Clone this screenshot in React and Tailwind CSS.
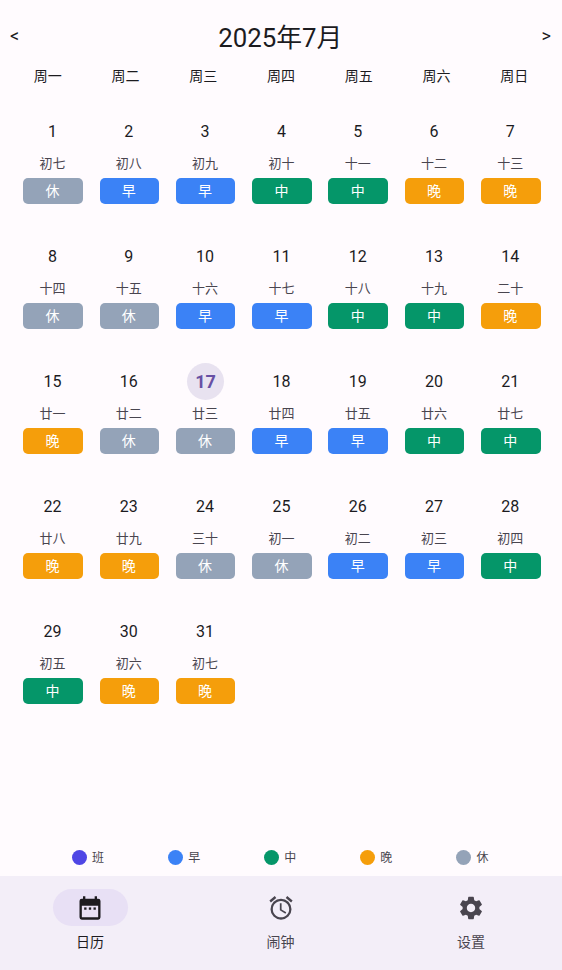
import { MdOutlineAlarm, MdSettings } from 'react-icons/md';

const weekdays = ['周一', '周二', '周三', '周四', '周五', '周六', '周日'];

const chipColors = {
  早: 'bg-[#3b82f6]',
  中: 'bg-[#059669]',
  晚: 'bg-[#f59e0b]',
  休: 'bg-[#94a3b8]',
};

const days = [
  ['初七', '休'], ['初八', '早'], ['初九', '早'], ['初十', '中'], ['十一', '中'], ['十二', '晚'], ['十三', '晚'],
  ['十四', '休'], ['十五', '休'], ['十六', '早'], ['十七', '早'], ['十八', '中'], ['十九', '中'], ['二十', '晚'],
  ['廿一', '晚'], ['廿二', '休'], ['廿三', '休'], ['廿四', '早'], ['廿五', '早'], ['廿六', '中'], ['廿七', '中'],
  ['廿八', '晚'], ['廿九', '晚'], ['三十', '休'], ['初一', '休'], ['初二', '早'], ['初三', '早'], ['初四', '中'],
  ['初五', '中'], ['初六', '晚'], ['初七', '晚'],
];

const legend = [
  ['班', 'bg-[#4f46e5]'],
  ['早', 'bg-[#3b82f6]'],
  ['中', 'bg-[#059669]'],
  ['晚', 'bg-[#f59e0b]'],
  ['休', 'bg-[#94a3b8]'],
];

function CalendarIcon() {
  return (
    <svg width="28" height="28" viewBox="0 0 24 24" fill="#1d1b20">
      <path d="M6 2h2v2h8V2h2v2h1a2 2 0 0 1 2 2v14a2 2 0 0 1-2 2H5a2 2 0 0 1-2-2V6a2 2 0 0 1 2-2h1V2zM5 10v10h14V10H5z" />
      <rect x="7" y="11.5" width="2" height="2" />
      <rect x="11" y="11.5" width="2" height="2" />
      <rect x="15" y="11.5" width="2" height="2" />
    </svg>
  );
}

function DayCell({ day, lunar, shift }) {
  const today = day === 17;
  return (
    <div className="flex flex-col items-center h-[125px]">
      <div
        className={`w-[37px] h-[37px] mt-[12px] rounded-full flex items-center justify-center ${
          today ? 'bg-[#e8e2f0] text-[#6750a4] font-bold text-[18px]' : 'pr-[1px] text-[#1c1b1f] text-[16px]'
        }`}
      >
        {day}
      </div>
      <div className="mt-[5px] mr-[1px] h-[18px] leading-[18px] text-[13px] text-[#49454f]">{lunar}</div>
      <div
        className={`mt-[5px] pr-[1px] w-[59.5px] h-[26px] rounded-[5px] flex items-center justify-center text-white text-[14px] ${chipColors[shift]}`}
      >
        {shift}
      </div>
    </div>
  );
}

function NavItem({ icon, label, active }) {
  return (
    <div className="w-[75px] flex flex-col items-center">
      <div className={`w-[75px] h-[37px] pr-[1px] rounded-full flex items-center justify-center ${active ? 'bg-[#e8e0f5]' : ''}`}>
        {icon}
      </div>
      <div className={`w-full pr-[1px] text-center mt-[6px] text-[14px] leading-[20px] ${active ? 'text-[#1d1b20]' : 'text-[#49454f]'}`}>
        {label}
      </div>
    </div>
  );
}

export default function App() {
  return (
    <div
      className="h-[970px] flex flex-col bg-[#fffbfe]"
      style={{ fontFamily: 'Roboto, "Noto Sans CJK SC", sans-serif' }}
    >
      <div className="flex items-center justify-between h-[37px] mt-[19px] px-[10px] text-[#1c1b1f]">
        <span className="text-[18px] leading-[18px] -mt-[3px]">&lt;</span>
        <span className="text-[25.8px] pt-[2px]">2025年7月</span>
        <span className="text-[18px] leading-[18px] -mt-[3px] mr-[1px]">&gt;</span>
      </div>

      <div className="grid grid-cols-7 px-[9px] mt-[7px] h-[26px]">
        {weekdays.map((w) => (
          <div key={w} className="text-center text-[14px] leading-[26px] text-[#1c1b1f]">{w}</div>
        ))}
      </div>

      <div className="grid grid-cols-7 pl-[14.9px] pr-[13.1px] mt-[12px]">
        {days.map(([lunar, shift], i) => (
          <DayCell key={i} day={i + 1} lunar={lunar} shift={shift} />
        ))}
      </div>

      <div className="flex-1" />

      <div className="flex justify-around items-center pl-[40px] pr-[41.5px] h-[36px] mb-[1px]">
        {legend.map(([label, color]) => (
          <div key={label} className="flex items-center gap-[5px]">
            <span className={`w-[15px] h-[15px] rounded-full ${color}`} />
            <span className="text-[12px] leading-[16px] mt-[1px] text-[#49454f]">{label}</span>
          </div>
        ))}
      </div>

      <div className="flex justify-between bg-[#f3eef8] h-[94px] pt-[13px] px-[53px]">
        <NavItem active icon={<CalendarIcon />} label="日历" />
        <NavItem icon={<MdOutlineAlarm size={28} color="#49454f" />} label="闹钟" />
        <NavItem icon={<MdSettings size={28} color="#49454f" />} label="设置" />
      </div>
    </div>
  );
}
